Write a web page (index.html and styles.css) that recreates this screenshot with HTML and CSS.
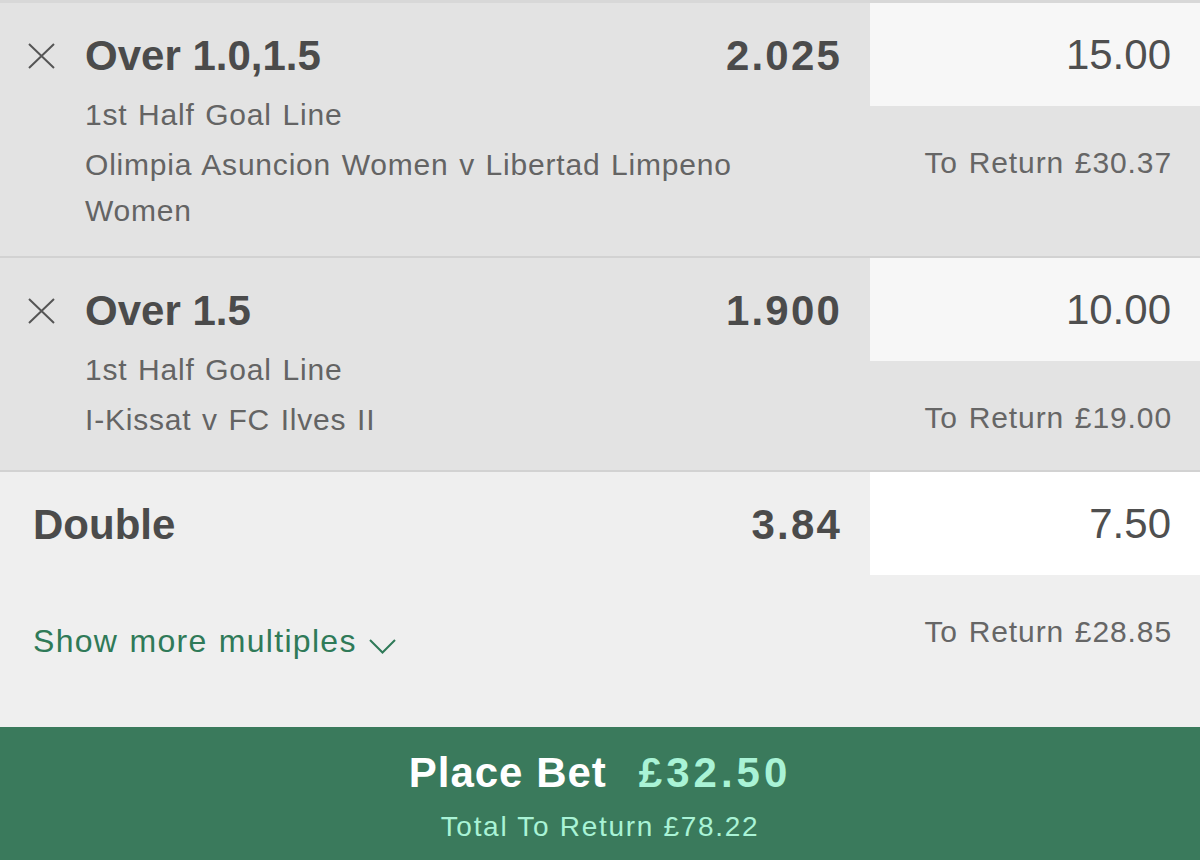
FILE: index.html
```html
<!DOCTYPE html>
<html lang="en">
<head>
<meta charset="utf-8">
<title>Bet Slip</title>
<link rel="stylesheet" href="styles.css">
</head>
<body>
<div class="slip">
  <div class="bet">
    <div class="bet-info">
      <div class="bet-head">
        <svg class="remove" width="27" height="26" viewBox="0 0 27 26"><path d="M1 1 L26 25 M26 1 L1 25" stroke="#555" stroke-width="2" fill="none"/></svg>
        <span class="sel">Over 1.0,1.5</span>
        <span class="odds">2.025</span>
      </div>
      <div class="market">1st Half Goal Line</div>
      <div class="event">Olimpia Asuncion Women v Libertad Limpeno Women</div>
    </div>
    <div class="bet-stake">
      <div class="stake">15.00</div>
      <div class="return">To Return £30.37</div>
    </div>
  </div>
  <div class="bet">
    <div class="bet-info">
      <div class="bet-head">
        <svg class="remove" width="27" height="26" viewBox="0 0 27 26"><path d="M1 1 L26 25 M26 1 L1 25" stroke="#555" stroke-width="2" fill="none"/></svg>
        <span class="sel">Over 1.5</span>
        <span class="odds">1.900</span>
      </div>
      <div class="market">1st Half Goal Line</div>
      <div class="event">I-Kissat v FC Ilves II</div>
    </div>
    <div class="bet-stake">
      <div class="stake">10.00</div>
      <div class="return">To Return £19.00</div>
    </div>
  </div>
  <div class="multiple">
    <div class="bet-info multi-info">
      <div class="bet-head">
        <span class="sel">Double</span>
        <span class="odds">3.84</span>
      </div>
      <div class="more">Show more multiples <svg class="chev" width="27" height="15" viewBox="0 0 27 15"><path d="M1 1 L13.5 13.5 L26 1" stroke="#2f7a58" stroke-width="2" fill="none"/></svg></div>
    </div>
    <div class="bet-stake">
      <div class="stake stake-white">7.50</div>
      <div class="return">To Return £28.85</div>
    </div>
  </div>
  <div class="place">
    <div class="place-line"><span class="place-label">Place Bet</span><span class="place-amount">£32.50</span></div>
    <div class="place-total">Total To Return £78.22</div>
  </div>
</div>
</body>
</html>
```
FILE: styles.css
```css
html, body {
  margin: 0;
  padding: 0;
}
body {
  width: 1200px;
  height: 860px;
  overflow: hidden;
  background: #efefef;
  font-family: "Liberation Sans", Arial, sans-serif;
}
.slip {
  border-top: 3px solid #d8d8d8;
  height: 857px;
  display: flex;
  flex-direction: column;
}
.bet {
  display: flex;
  background: #e3e3e3;
  border-bottom: 2px solid #d2d2d2;
}
.bet-info {
  flex: 1;
  padding: 17px 30px 22px 0;
}
.bet-head {
  display: flex;
  align-items: center;
  height: 72px;
}
.remove {
  margin-left: 28px;
  margin-right: 30px;
  flex: none;
}
.sel, .odds {
  font-weight: 700;
  font-size: 42px;
  line-height: 72px;
  color: #4b4b4b;
}
.sel {
  flex: 1;
}
.odds {
  letter-spacing: 2.2px;
  margin-right: -2px;
}
.market, .event {
  padding-left: 85px;
  font-size: 30px;
  line-height: 46px;
  letter-spacing: 0.8px;
  word-spacing: 1.5px;
  color: #646464;
}
.event {
  margin-top: 4px;
}
.bet-stake {
  width: 330px;
  flex: none;
  padding-bottom: 29px;
}
.stake {
  height: 103px;
  background: #f7f7f7;
  font-size: 42px;
  line-height: 103px;
  text-align: right;
  padding-right: 29px;
  color: #4f4f4f;
}
.stake-white {
  background: #ffffff;
}
.return {
  margin-top: 34px;
  font-size: 30px;
  line-height: 46px;
  letter-spacing: 0.9px;
  word-spacing: 1.5px;
  text-align: right;
  padding-right: 28px;
  color: #666666;
}
.multiple {
  flex: 1;
  display: flex;
  background: #efefef;
}
.multi-info {
  padding-left: 33px;
}
.more {
  margin-top: 57px;
  font-size: 32px;
  line-height: 46px;
  letter-spacing: 1.3px;
  word-spacing: 1px;
  color: #2f7a58;
  display: flex;
  align-items: center;
}
.chev {
  margin-left: 12px;
  margin-top: 10px;
}
.place {
  height: 133px;
  background: #3a7a5c;
  box-sizing: border-box;
  padding-top: 21px;
  text-align: center;
}
.place-line {
  line-height: 50px;
  font-size: 42px;
  font-weight: 700;
}
.place-label {
  color: #ffffff;
  letter-spacing: 1px;
}
.place-amount {
  color: #a9f3d6;
  margin-left: 32px;
  letter-spacing: 4px;
}
.place-total {
  margin-top: 9px;
  line-height: 40px;
  font-size: 28px;
  letter-spacing: 1.7px;
  color: #a9f3d6;
}
```
